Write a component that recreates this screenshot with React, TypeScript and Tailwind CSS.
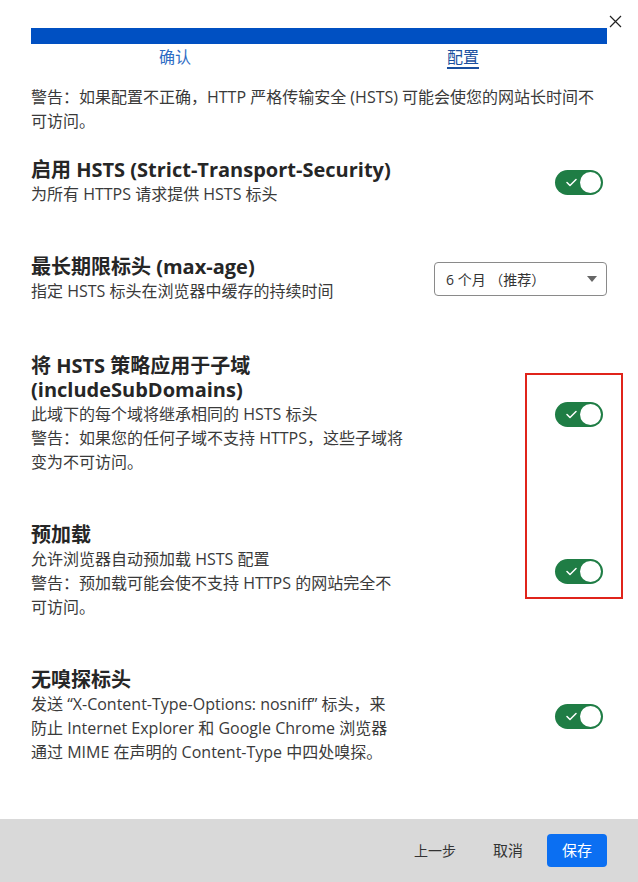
import React from "react";

const FONT = { fontFamily: '"Open Sans", "Noto Sans CJK SC", sans-serif' };

function Toggle() {
  return (
    <div className="relative w-[48px] h-[25px] rounded-full bg-[#1f7d45] shrink-0">
      <svg className="absolute left-[11px] top-[8px]" width="11" height="9" viewBox="0 0 11 9" fill="none">
        <path d="M1 4.5 L4 7.5 L10 1.5" stroke="white" strokeWidth="1.5" strokeLinecap="round" strokeLinejoin="round" />
      </svg>
      <div className="absolute right-[2px] top-[2px] w-[21px] h-[21px] rounded-full bg-white" />
    </div>
  );
}

function Section({ title, children, control, className = "" }: { title: React.ReactNode; children: React.ReactNode; control: React.ReactNode; className?: string }) {
  return (
    <div className={"flex items-center justify-between " + className}>
      <div className="flex flex-col">
        <div className="text-[20px] leading-[24px] font-bold text-[#262626]">{title}</div>
        <div className="text-[16px] leading-[24px] text-[#3a3a3a]">{children}</div>
      </div>
      <div className="pr-[4px]">{control}</div>
    </div>
  );
}

export default function App() {
  return (
    <div className="relative w-[638px] h-[882px] bg-white flex flex-col" style={FONT}>
      <svg className="absolute left-[609px] top-[15px]" width="13" height="13" viewBox="0 0 13 13">
        <path d="M1 1 L12 12 M12 1 L1 12" stroke="#222" strokeWidth="1.2" />
      </svg>

      <div className="flex-1 px-[31px] pt-[28px]">
        <div className="h-[16px] bg-[#0050c2]" />
        <div className="grid grid-cols-2 mt-[1px] text-[16px] leading-[24px]">
          <div className="text-center text-[#2e6cc4]">确认</div>
          <div className="text-center">
            <span className="text-[#1a4f9e] underline underline-offset-[4px] decoration-[1.5px]">配置</span>
          </div>
        </div>

        <p className="mt-[16px] text-[16px] leading-[24px] text-[#3a3a3a] whitespace-nowrap">
          警告：如果配置不正确，HTTP 严格传输安全 (HSTS) 可能会使您的网站长时间不
          <br />
          可访问。
        </p>

        <div className="flex flex-col mt-[25px]">
          <Section title="启用 HSTS (Strict-Transport-Security)" control={<Toggle />}>
            为所有 HTTPS 请求提供 HSTS 标头
          </Section>

          <Section
            className="mt-[49px]"
            title="最长期限标头 (max-age)"
            control={
              <div className="-mr-[4px] w-[173px] h-[34px] rounded-[4px] border border-[#8a8a8a] flex items-center justify-between pl-[11px] pr-[9px] text-[14px] text-[#333]">
                <span>6 个月 （推荐）</span>
                <svg width="10" height="6" viewBox="0 0 10 6">
                  <path d="M0 0 L10 0 L5 6 Z" fill="#666" />
                </svg>
              </div>
            }
          >
            指定 HSTS 标头在浏览器中缓存的持续时间
          </Section>

          <Section
            className="mt-[51px]"
            title={
              <>
                将 HSTS 策略应用于子域
                <br />
                (includeSubDomains)
              </>
            }
            control={<Toggle />}
          >
            此域下的每个域将继承相同的 HSTS 标头
            <br />
            警告：如果您的任何子域不支持 HTTPS，这些子域将
            <br />
            变为不可访问。
          </Section>

          <Section
            className="mt-[49px]"
            title="预加载"
            control={<Toggle />}
          >
            允许浏览器自动预加载 HSTS 配置
            <br />
            警告：预加载可能会使不支持 HTTPS 的网站完全不
            <br />
            可访问。
          </Section>

          <Section
            className="mt-[49px]"
            title="无嗅探标头"
            control={<Toggle />}
          >
            发送 “X-Content-Type-Options: nosniff” 标头，来
            <br />
            防止 Internet Explorer 和 Google Chrome 浏览器
            <br />
            通过 MIME 在声明的 Content-Type 中四处嗅探。
          </Section>
        </div>
      </div>

      <div className="h-[63px] bg-[#d9d9d9] flex items-center justify-end pr-[31px] text-[15px] text-[#333]">
        <span className="mr-[37px] text-[14px]">上一步</span>
        <span className="mr-[24px]">取消</span>
        <button className="w-[60px] h-[33px] rounded-[4px] bg-[#0b6ff2] text-white text-[15px]">保存</button>
      </div>

      <div className="absolute left-[525px] top-[373px] w-[98px] h-[226px] border-2 border-[#e0241b]" />
    </div>
  );
}
